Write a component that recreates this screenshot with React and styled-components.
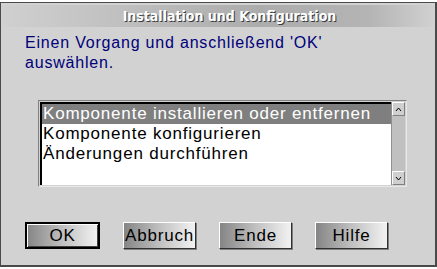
import React from "react";
import styled, { createGlobalStyle } from "styled-components";

const Global = createGlobalStyle`
  html, body { margin: 0; padding: 0; background: #d2d2d2; }
  #root { width: 437px; height: 269px; }
`;

const Window = styled.div`
  box-sizing: border-box;
  width: 437px;
  height: 269px;
  padding-top: 2px;
  background: #ffffff;
`;

const Frame = styled.div`
  box-sizing: border-box;
  height: 265px;
  border: 1px solid #4a4a4a;
  border-right-width: 2px;
  border-bottom-width: 2px;
  background: #d2d2d2;
  display: flex;
  flex-direction: column;
  padding: 2px 2px 0 1px;
`;

const TitleBar = styled.div`
  height: 22px;
  display: flex;
  align-items: center;
  justify-content: center;
  padding-left: 24px;
  background: linear-gradient(90deg, #d0d0d0 0%, #bebebe 30%, #acacac 60%, #b4b4b4 85%, #d0d0d0 100%);
  font-family: "DejaVu Sans Condensed", "DejaVu Sans", sans-serif;
  font-weight: bold;
  font-size: 14px;
  color: #ffffff;
  text-shadow: 1px 1px 0 #3a3a3a;
`;

const Message = styled.div`
  margin: 6px 0 0 23px;
  font-family: "Liberation Sans", Arial, sans-serif;
  font-size: 16px;
  line-height: 20px;
  letter-spacing: 0.8px;
  color: #00007a;
`;

const ListBox = styled.div`
  box-sizing: border-box;
  margin: 27px 0 0 36px;
  width: 369px;
  height: 87px;
  display: flex;
  border: 1px solid #e8e8e8;
  border-top-color: #808080;
  border-left-color: #808080;
  background: #d2d2d2;
  padding: 1px;
`;

const ListArea = styled.div`
  flex: 1;
  background: #ffffff;
  border-top: 2px solid #000;
  border-left: 2px solid #000;
  overflow: hidden;
`;

const Item = styled.div`
  height: 20px;
  line-height: 20px;
  padding-left: 1px;
  font-family: "Liberation Sans", Arial, sans-serif;
  font-size: 17px;
  letter-spacing: 0.8px;
  white-space: nowrap;
  color: ${(p) => (p.$selected ? "#ffffff" : "#000000")};
  background: ${(p) => (p.$selected ? "#7f7f7f" : "transparent")};
`;

const ScrollBar = styled.div`
  width: 13px;
  display: flex;
  flex-direction: column;
  justify-content: space-between;
  background: #c0c0c0;
  border-left: 1px solid #909090;
`;

const Arrow = styled.div`
  box-sizing: border-box;
  height: 14px;
  display: flex;
  align-items: center;
  justify-content: center;
  background: #cfcfcf;
  border: 1px solid #808080;
  border-top-color: #ffffff;
  border-left-color: #ffffff;
`;

const ButtonRow = styled.div`
  display: flex;
  gap: 23px;
  margin: 35px 0 0 23px;
`;

const Button = styled.div`
  box-sizing: border-box;
  width: ${(p) => (p.$default ? "75px" : "73px")};
  height: 27px;
  display: flex;
  align-items: center;
  justify-content: center;
  font-family: "Liberation Sans", Arial, sans-serif;
  font-size: 17px;
  letter-spacing: 0.8px;
  color: #000;
  background: linear-gradient(90deg, #858585 0%, #c0c0c0 50%, #f2f2f2 100%);
  border: ${(p) => (p.$default ? "2px solid #000" : "1px solid")};
  border-color: ${(p) => (p.$default ? "#000" : "#ffffff #303030 #303030 #ffffff")};
  box-shadow: ${(p) => (p.$default ? "inset 1px 1px 0 #fff, inset -1px -1px 0 #404040" : "1px 1px 0 #808080")};
`;

const ArrowIcon = ({ up }) => (
  <svg width="7" height="5" viewBox="0 0 7 5">
    <path d={up ? "M1 4 L3.5 1 L6 4" : "M1 1 L3.5 4 L6 1"} fill="none" stroke="#000" strokeWidth="1" />
  </svg>
);

export default function App() {
  return (
    <>
      <Global />
      <Window>
        <Frame>
          <TitleBar>Installation und Konfiguration</TitleBar>
          <Message>
            Einen Vorgang und anschließend 'OK'
            <br />
            auswählen.
          </Message>
          <ListBox>
            <ListArea>
              <Item $selected>Komponente installieren oder entfernen</Item>
              <Item>Komponente konfigurieren</Item>
              <Item>Änderungen durchführen</Item>
            </ListArea>
            <ScrollBar>
              <Arrow><ArrowIcon up /></Arrow>
              <Arrow><ArrowIcon /></Arrow>
            </ScrollBar>
          </ListBox>
          <ButtonRow>
            <Button $default>OK</Button>
            <Button>Abbruch</Button>
            <Button>Ende</Button>
            <Button>Hilfe</Button>
          </ButtonRow>
        </Frame>
      </Window>
    </>
  );
}
